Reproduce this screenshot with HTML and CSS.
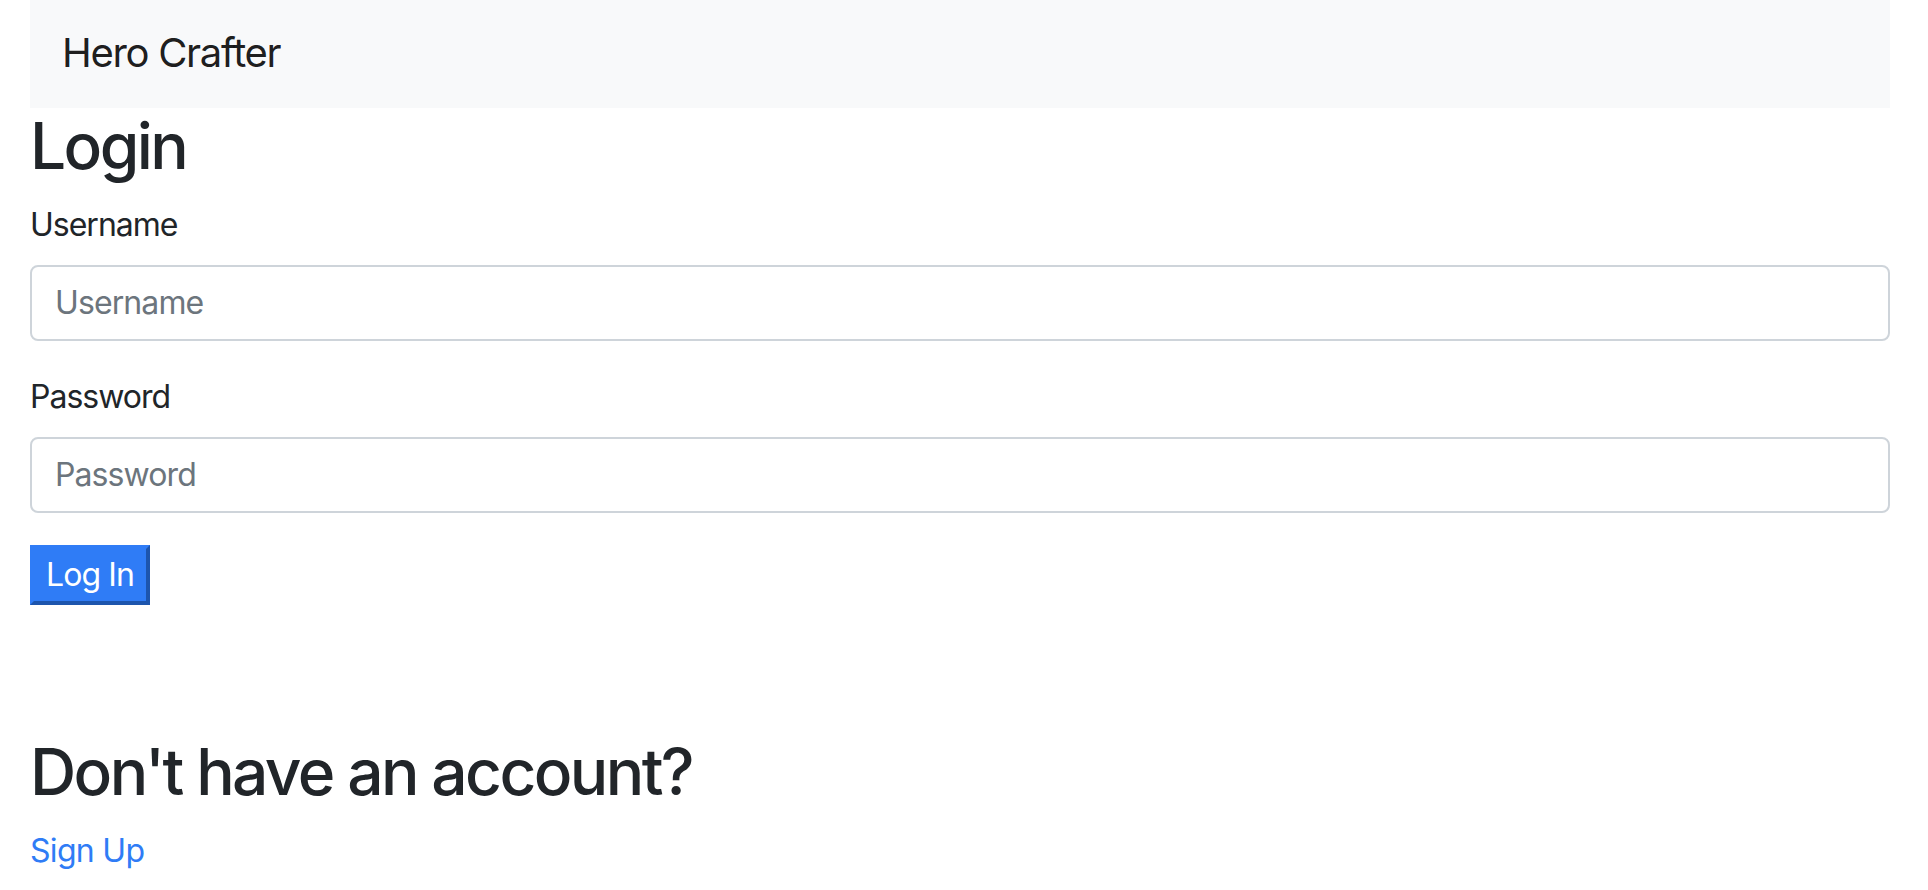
FILE: index.html
```html
<!DOCTYPE html>
<html lang="en">
<head>
<meta charset="utf-8">
<title>Hero Crafter</title>
<link rel="stylesheet" href="styles.css">
</head>
<body>
<div class="page">
  <nav class="navbar">
    <a class="brand" href="#">Hero Crafter</a>
  </nav>
  <h1 class="heading">Login</h1>
  <form class="login-form">
    <div class="form-group">
      <label class="form-label" for="username">Username</label>
      <input class="form-input" id="username" type="text" placeholder="Username">
    </div>
    <div class="form-group">
      <label class="form-label" for="password">Password</label>
      <input class="form-input" id="password" type="password" placeholder="Password">
    </div>
    <button class="submit-btn" type="submit">Log In</button>
  </form>
  <h1 class="heading signup-heading">Don't have an account?</h1>
  <a class="signup-link" href="#">Sign Up</a>
</div>
</body>
</html>
```
FILE: styles.css
```css
* { box-sizing: border-box; }

html, body {
  margin: 0;
  padding: 0;
  background: #ffffff;
}

body {
  font-family: Inter, "Noto Sans", "Liberation Sans", sans-serif;
  font-size: 32px;
  line-height: 1.5;
  letter-spacing: -0.9px;
  color: #212529;
}

.page {
  padding: 0 38px 0 30px;
}

.navbar {
  height: 108px;
  background: #f8f9fa;
  display: flex;
  align-items: center;
  padding: 0 32px;
}

.brand {
  font-size: 40px;
  line-height: 60px;
  letter-spacing: -1.3px;
  color: rgba(0, 0, 0, 0.9);
  text-decoration: none;
  margin-top: -2px;
}

.heading {
  font-size: 64px;
  font-weight: 500;
  line-height: 1.2;
  letter-spacing: -2.6px;
  margin: 0 0 16px 0;
  color: #212529;
}

.login-form {
  display: flex;
  flex-direction: column;
  align-items: flex-start;
}

.form-group {
  display: flex;
  flex-direction: column;
  align-self: stretch;
  margin-bottom: 32px;
}

.form-label {
  display: block;
  margin-bottom: 16px;
  letter-spacing: -1px;
}

.form-input {
  display: block;
  width: 100%;
  height: 76px;
  padding: 12px 23px;
  font-family: inherit;
  font-size: 32px;
  line-height: 1.5;
  letter-spacing: -0.9px;
  color: #495057;
  background: #ffffff;
  border: 2px solid #ced4da;
  border-radius: 8px;
  outline: none;
}

.form-input::placeholder {
  color: #6c757d;
  opacity: 1;
}

.submit-btn {
  height: 60px;
  padding: 2px 12px;
  font-family: inherit;
  font-size: 32px;
  line-height: 48px;
  letter-spacing: -0.9px;
  color: #ffffff;
  background: #2f7cf6;
  border-style: solid;
  border-width: 4px;
  border-color: #2f7cf6 #1d55ad #1d55ad #2f7cf6;
  border-radius: 0;
  cursor: pointer;
}

.signup-heading {
  margin-top: 129px;
}

.signup-link {
  color: #2f7cf6;
  text-decoration: none;
  font-size: 32px;
  letter-spacing: -0.7px;
}
```
